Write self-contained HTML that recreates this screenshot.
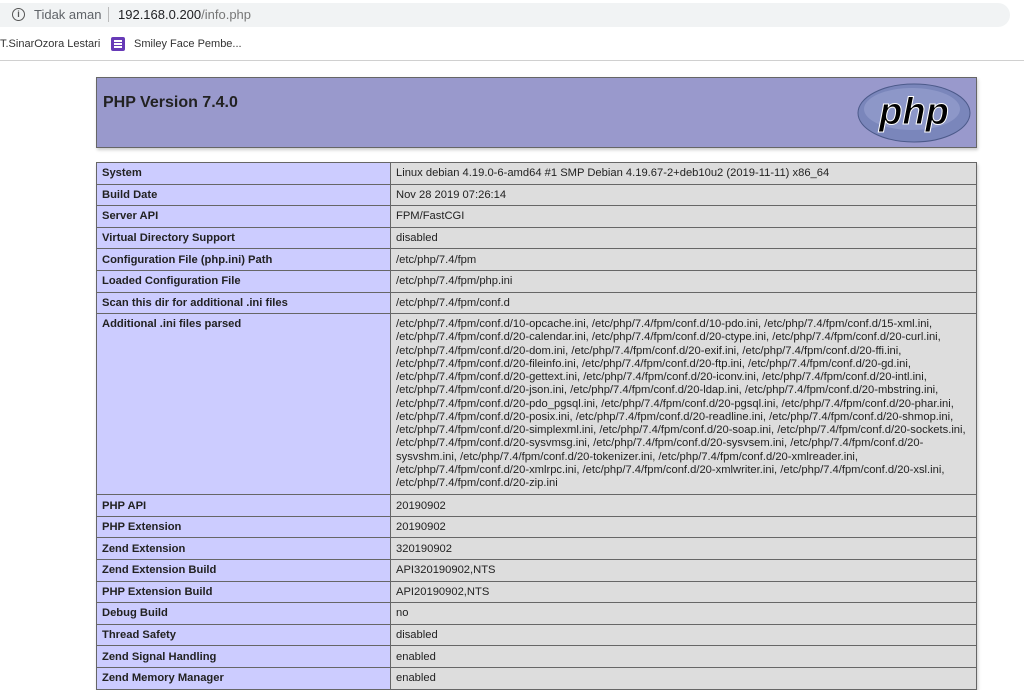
<!DOCTYPE html>
<html><head><meta charset="utf-8">
<style>
body{margin:0;background:#fff;font-family:"Liberation Sans",Arial,sans-serif;width:1024px;height:686px;overflow:hidden;position:relative}
.addr{position:absolute;left:0;top:0;width:1024px;height:30px;background:#fff}
.pill{position:absolute;left:0;top:3px;width:1010px;height:24px;background:#f1f3f4;border-radius:0 12px 12px 0}
.bm{position:absolute;top:30px;left:0;width:1024px;height:30px;border-bottom:1px solid #d0d0d0;font-size:11px;color:#333}
.hdr{position:absolute;left:96px;top:77px;width:879px;height:69px;background:#99c;border:1px solid #666;box-shadow:1px 2px 3px #ccc}
.hdr h1{margin:0;position:absolute;left:6px;top:16px;font-size:16px;font-weight:bold;color:#222}
table{position:absolute;left:96px;top:162px;width:881px;border-collapse:collapse;font-size:11.2px;color:#222;box-shadow:1px 2px 3px #ccc}
td{border:1px solid #666;padding:0 5px;vertical-align:middle;white-space:nowrap}
td.e{background:#ccf;width:283px;font-weight:bold}
td.v{background:#ddd}
tr{height:21.6px}
tr.bigr{height:180px}
td.big{vertical-align:top;padding-top:4px;padding-bottom:4px}
td.big .l{display:block;height:13.24px;line-height:13.24px;font-size:11.2px}
</style></head><body>
<div class="addr"><div class="pill"></div>
<div style="position:absolute;left:12px;top:8px;width:11px;height:11px;border:1.5px solid #555;border-radius:50%;font-size:9px;line-height:11px;text-align:center;color:#555;font-weight:bold">i</div>
<div style="position:absolute;left:34px;top:7px;font-size:13px;color:#5f6368">Tidak aman</div>
<div style="position:absolute;left:108px;top:7px;width:1px;height:15px;background:#bbb"></div>
<div style="position:absolute;left:118px;top:7px;font-size:13px;color:#202124">192.168.0.200<span style="color:#777">/info.php</span></div>
</div>
<div class="bm">
<div style="position:absolute;left:0;top:8px">T.SinarOzora Lestari</div>
<div style="position:absolute;left:111px;top:7px;width:14px;height:14px;background:#673ab7;border-radius:2px"><div style="position:absolute;left:3px;top:3px;width:8px;height:2px;background:#fff;box-shadow:0 3px 0 #fff,0 6px 0 #fff"></div></div>
<div style="position:absolute;left:134px;top:8px">Smiley Face Pembe...</div>
</div>
<div class="hdr"><h1>PHP Version 7.4.0</h1>
<svg style="position:absolute;left:759px;top:4px" width="116" height="62" viewBox="0 0 116 62"><ellipse cx="58" cy="31" rx="56" ry="29" fill="#7a86bb" stroke="#4c5a8a" stroke-width="1"/><ellipse cx="56" cy="27" rx="48" ry="21" fill="#9aa3d0" opacity=".6"/><text x="58" y="42" text-anchor="middle" font-family="Liberation Sans,sans-serif" font-size="38" font-weight="bold" font-style="italic" fill="#000" stroke="#fff" stroke-width="1">php</text></svg>
</div>
<table>
<tr><td class="e">System</td><td class="v">Linux debian 4.19.0-6-amd64 #1 SMP Debian 4.19.67-2+deb10u2 (2019-11-11) x86_64</td></tr>
<tr><td class="e">Build Date</td><td class="v">Nov 28 2019 07:26:14</td></tr>
<tr><td class="e">Server API</td><td class="v">FPM/FastCGI</td></tr>
<tr><td class="e">Virtual Directory Support</td><td class="v">disabled</td></tr>
<tr><td class="e">Configuration File (php.ini) Path</td><td class="v">/etc/php/7.4/fpm</td></tr>
<tr><td class="e">Loaded Configuration File</td><td class="v">/etc/php/7.4/fpm/php.ini</td></tr>
<tr><td class="e">Scan this dir for additional .ini files</td><td class="v">/etc/php/7.4/fpm/conf.d</td></tr>
<tr class="bigr"><td class="e big">Additional .ini files parsed</td><td class="v big">
<div class="l">/etc/php/7.4/fpm/conf.d/10-opcache.ini, /etc/php/7.4/fpm/conf.d/10-pdo.ini, /etc/php/7.4/fpm/conf.d/15-xml.ini,</div>
<div class="l">/etc/php/7.4/fpm/conf.d/20-calendar.ini, /etc/php/7.4/fpm/conf.d/20-ctype.ini, /etc/php/7.4/fpm/conf.d/20-curl.ini,</div>
<div class="l">/etc/php/7.4/fpm/conf.d/20-dom.ini, /etc/php/7.4/fpm/conf.d/20-exif.ini, /etc/php/7.4/fpm/conf.d/20-ffi.ini,</div>
<div class="l">/etc/php/7.4/fpm/conf.d/20-fileinfo.ini, /etc/php/7.4/fpm/conf.d/20-ftp.ini, /etc/php/7.4/fpm/conf.d/20-gd.ini,</div>
<div class="l">/etc/php/7.4/fpm/conf.d/20-gettext.ini, /etc/php/7.4/fpm/conf.d/20-iconv.ini, /etc/php/7.4/fpm/conf.d/20-intl.ini,</div>
<div class="l">/etc/php/7.4/fpm/conf.d/20-json.ini, /etc/php/7.4/fpm/conf.d/20-ldap.ini, /etc/php/7.4/fpm/conf.d/20-mbstring.ini,</div>
<div class="l">/etc/php/7.4/fpm/conf.d/20-pdo_pgsql.ini, /etc/php/7.4/fpm/conf.d/20-pgsql.ini, /etc/php/7.4/fpm/conf.d/20-phar.ini,</div>
<div class="l">/etc/php/7.4/fpm/conf.d/20-posix.ini, /etc/php/7.4/fpm/conf.d/20-readline.ini, /etc/php/7.4/fpm/conf.d/20-shmop.ini,</div>
<div class="l">/etc/php/7.4/fpm/conf.d/20-simplexml.ini, /etc/php/7.4/fpm/conf.d/20-soap.ini, /etc/php/7.4/fpm/conf.d/20-sockets.ini,</div>
<div class="l">/etc/php/7.4/fpm/conf.d/20-sysvmsg.ini, /etc/php/7.4/fpm/conf.d/20-sysvsem.ini, /etc/php/7.4/fpm/conf.d/20-</div>
<div class="l">sysvshm.ini, /etc/php/7.4/fpm/conf.d/20-tokenizer.ini, /etc/php/7.4/fpm/conf.d/20-xmlreader.ini,</div>
<div class="l">/etc/php/7.4/fpm/conf.d/20-xmlrpc.ini, /etc/php/7.4/fpm/conf.d/20-xmlwriter.ini, /etc/php/7.4/fpm/conf.d/20-xsl.ini,</div>
<div class="l">/etc/php/7.4/fpm/conf.d/20-zip.ini</div></td></tr>
<tr><td class="e">PHP API</td><td class="v">20190902</td></tr>
<tr><td class="e">PHP Extension</td><td class="v">20190902</td></tr>
<tr><td class="e">Zend Extension</td><td class="v">320190902</td></tr>
<tr><td class="e">Zend Extension Build</td><td class="v">API320190902,NTS</td></tr>
<tr><td class="e">PHP Extension Build</td><td class="v">API20190902,NTS</td></tr>
<tr><td class="e">Debug Build</td><td class="v">no</td></tr>
<tr><td class="e">Thread Safety</td><td class="v">disabled</td></tr>
<tr><td class="e">Zend Signal Handling</td><td class="v">enabled</td></tr>
<tr><td class="e">Zend Memory Manager</td><td class="v">enabled</td></tr>
</table>
</body></html>
